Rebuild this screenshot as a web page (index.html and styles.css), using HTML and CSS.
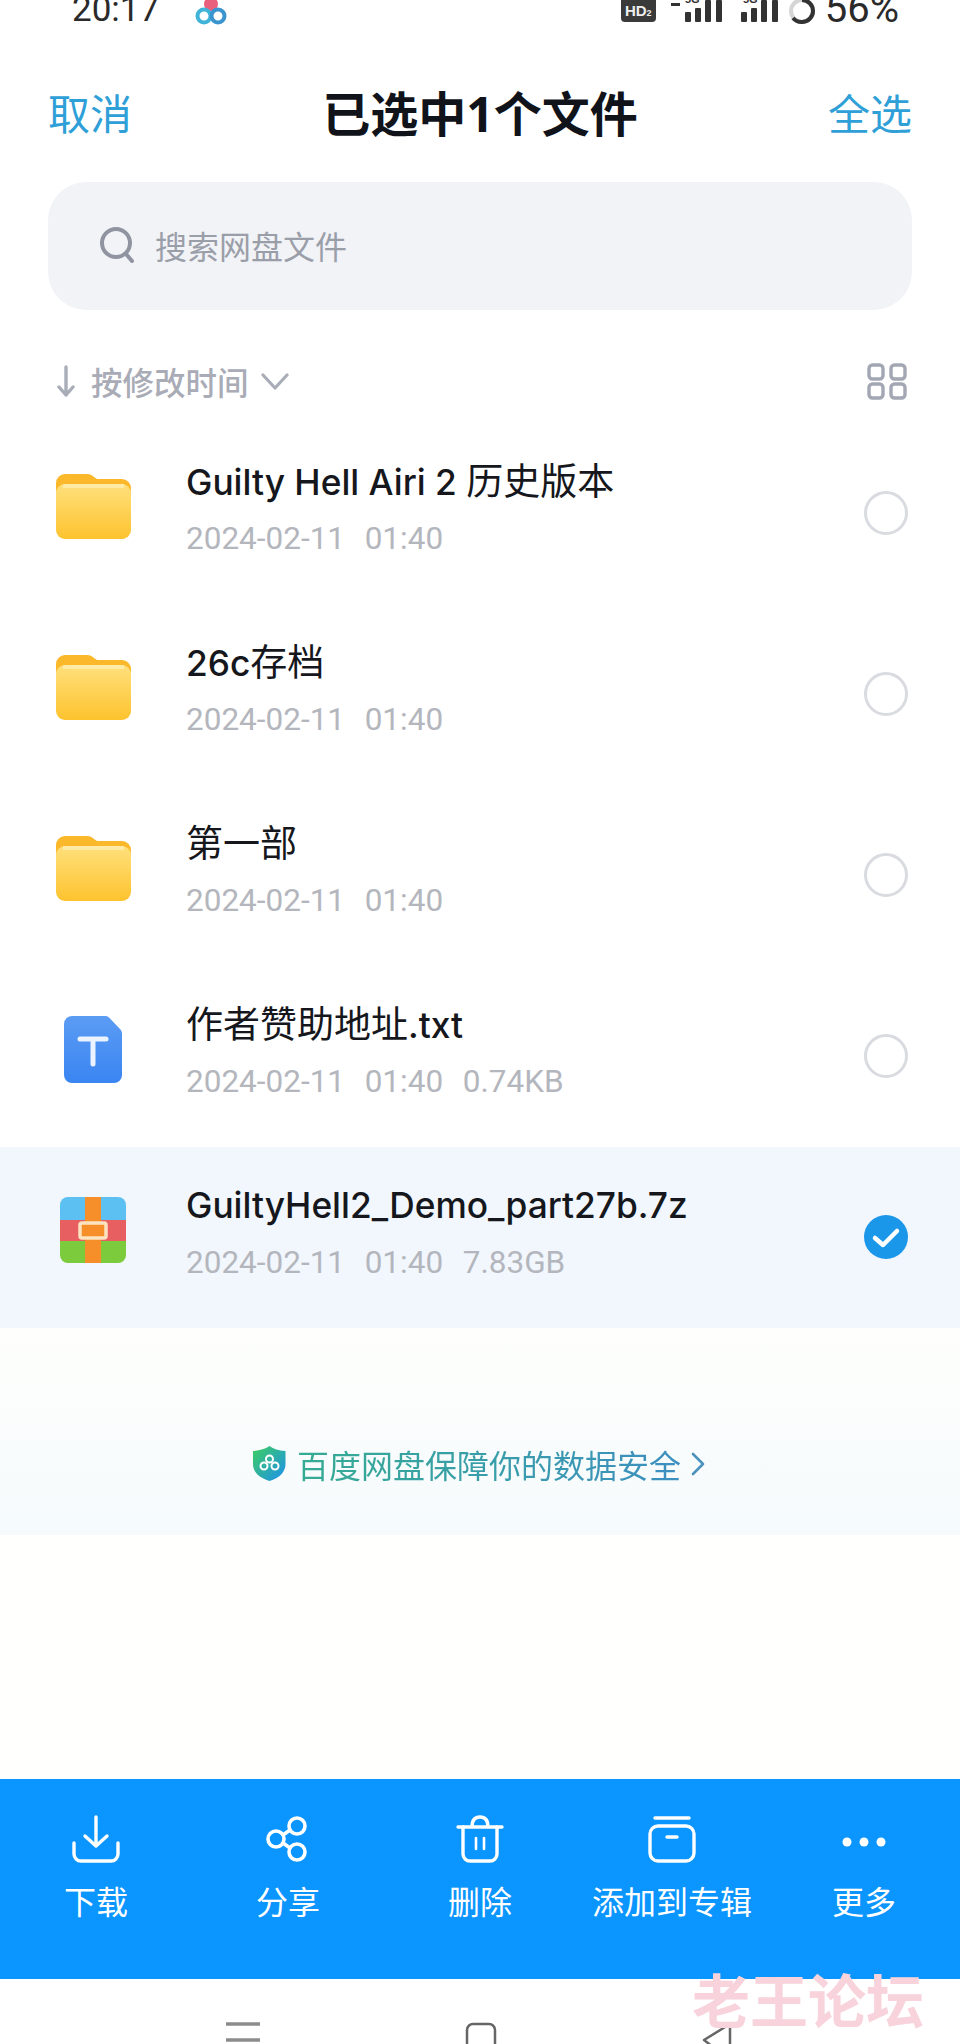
FILE: index.html
```html
<!DOCTYPE html>
<html lang="zh">
<head>
<meta charset="utf-8">
<title>已选中1个文件</title>
<link rel="stylesheet" href="styles.css">
</head>
<body>
<svg class="defs" width="0" height="0" aria-hidden="true">
  <defs>
    <linearGradient id="fold" x1="0" y1="0" x2="0" y2="1"><stop offset="0" stop-color="#ffe07c"/><stop offset="1" stop-color="#fdc32e"/></linearGradient>
    <linearGradient id="txt" x1="0" y1="0" x2="0" y2="1"><stop offset="0" stop-color="#5b9cf4"/><stop offset="1" stop-color="#3a85f2"/></linearGradient>
    <linearGradient id="shield" x1="0" y1="0" x2="1" y2="1"><stop offset="0" stop-color="#3ecf5e"/><stop offset="1" stop-color="#1c8ff0"/></linearGradient>
    <symbol id="folder" viewBox="0 0 75 66">
      <path d="M0 10a9 9 0 0 1 9-9h22c3 0 5 1 7 3l3 2h25a9 9 0 0 1 9 9v10H0z" fill="#fbb82a"/>
      <path d="M0 20a9 9 0 0 1 9-9h57a9 9 0 0 1 9 9v37a9 9 0 0 1-9 9H9a9 9 0 0 1-9-9z" fill="url(#fold)"/>
      <rect x="7" y="11" width="61" height="4" fill="#fff0b8" opacity=".7"/>
    </symbol>
    <symbol id="bars" viewBox="0 0 37 22">
      <rect x="0" y="12" width="6" height="10" rx="1"/><rect x="10" y="8" width="6" height="14" rx="1"/><rect x="20" y="0" width="6" height="22" rx="1"/><rect x="31" y="0" width="6" height="22" rx="1"/>
    </symbol>
  </defs>
</svg>

<header class="status">
  <span class="time">20:17</span>
  <svg class="cloud" viewBox="0 0 32 25" fill="none" stroke-width="4">
    <circle cx="16" cy="4" r="7" fill="#e8607c"/>
    <circle cx="9" cy="16" r="6.500" stroke="#3fb4d8"/>
    <circle cx="23" cy="16" r="6.500" stroke="#3a94d0"/>
  </svg>
  <span class="status-gap"></span>
  <span class="hd">HD<small>2</small></span>
  <svg class="sig-a" viewBox="0 0 52 24"><text x="14" y="3" class="sig-text">5G</text><rect x="0" y="3" width="9" height="3"/><use href="#bars" x="14" width="37" height="22"/></svg>
  <svg class="sig-b" viewBox="0 0 37 24"><text x="2" y="3" class="sig-text">5G</text><use href="#bars" width="37" height="22"/></svg>
  <svg class="ring" viewBox="0 0 28 28" fill="none" stroke-width="4">
    <circle cx="14" cy="11" r="11" stroke="#d5d5d5"/>
    <path d="M14 0a11 11 0 0 1 0 22 11 11 0 0 1-9-4" stroke="#333"/>
  </svg>
  <span class="batt">56%</span>
</header>

<nav class="topbar">
  <span class="link">取消</span>
  <h1 class="title">已选中1个文件</h1>
  <span class="link">全选</span>
</nav>

<div class="search">
  <svg class="search-ic" viewBox="0 0 38 36" fill="none" stroke="#9094a0" stroke-width="4" stroke-linecap="round"><circle cx="18" cy="16" r="14"/><path d="M28 27l6 7"/></svg>
  <span>搜索网盘文件</span>
</div>

<div class="sort">
  <svg class="sort-arrow" viewBox="0 0 20 32" fill="none" stroke="#a9adb8" stroke-width="3.4" stroke-linecap="round" stroke-linejoin="round"><path d="M10 2v28M3 22l7 8 7-8"/></svg>
  <span class="sort-label">按修改时间</span>
  <svg class="sort-chev" viewBox="0 0 28 17" fill="none" stroke="#a9adb8" stroke-width="3.2" stroke-linecap="round" stroke-linejoin="round"><path d="M2 2l12 13L26 2"/></svg>
  <span class="status-gap"></span>
  <svg class="grid-ic" viewBox="0 0 40 37" fill="none" stroke="#a3a7b3" stroke-width="3.4"><rect x="2" y="2" width="14" height="14" rx="3.5"/><rect x="24" y="2" width="14" height="14" rx="3.5"/><rect x="2" y="21" width="14" height="14" rx="3.5"/><rect x="24" y="21" width="14" height="14" rx="3.5"/></svg>
</div>

<ul class="list">
  <li class="row">
    <div class="ic"><svg class="ic-folder"><use href="#folder"/></svg></div>
    <div class="meta"><div class="name">Guilty Hell Airi 2 <span class="cjk">历史版本</span></div><div class="date">2024-02-11&nbsp;&nbsp;01:40</div></div>
    <span class="radio"></span>
  </li>
  <li class="row">
    <div class="ic"><svg class="ic-folder"><use href="#folder"/></svg></div>
    <div class="meta"><div class="name">26c<span class="cjk">存档</span></div><div class="date">2024-02-11&nbsp;&nbsp;01:40</div></div>
    <span class="radio"></span>
  </li>
  <li class="row">
    <div class="ic"><svg class="ic-folder"><use href="#folder"/></svg></div>
    <div class="meta"><div class="name"><span class="cjk">第一部</span></div><div class="date">2024-02-11&nbsp;&nbsp;01:40</div></div>
    <span class="radio"></span>
  </li>
  <li class="row">
    <div class="ic"><svg class="ic-txt" viewBox="0 0 58 67"><path d="M8 0h33c2 0 3 .6 4.500 2L56 13c1.400 1.400 2 3 2 5v41a8 8 0 0 1-8 8H8a8 8 0 0 1-8-8V8a8 8 0 0 1 8-8z" fill="url(#txt)"/><path d="M16 23h26M29 23v25" fill="none" stroke="#eaf3ff" stroke-width="5" stroke-linecap="round"/></svg></div>
    <div class="meta"><div class="name"><span class="cjk">作者赞助地址</span>.txt</div><div class="date">2024-02-11&nbsp;&nbsp;01:40&nbsp;&nbsp;0.74KB</div></div>
    <span class="radio"></span>
  </li>
  <li class="row selected">
    <div class="ic"><svg class="ic-zip" viewBox="0 0 66 66">
      <defs><clipPath id="zc"><rect width="66" height="66" rx="8"/></clipPath></defs>
      <g clip-path="url(#zc)">
        <rect width="66" height="23" fill="#5cc0f2"/><rect y="23" width="66" height="21" fill="#e85f62"/><rect y="44" width="66" height="22" fill="#7ccb3c"/>
        <rect x="25" width="16" height="66" fill="#f68f2a"/>
        <rect x="20" y="26" width="26" height="15" rx="2" fill="#f68f2a" stroke="#fde3c0" stroke-width="3.500"/>
      </g>
    </svg></div>
    <div class="meta"><div class="name">GuiltyHell2_Demo_part27b.7z</div><div class="date">2024-02-11&nbsp;&nbsp;01:40&nbsp;&nbsp;7.83GB</div></div>
    <svg class="check" viewBox="0 0 44 44"><circle cx="22" cy="22" r="22" fill="#1b97ea"/><path d="M11 23l8 7 14-14" fill="none" stroke="#fff" stroke-width="4.500" stroke-linecap="round" stroke-linejoin="round"/></svg>
  </li>
</ul>

<section class="promo">
  <svg class="shield" viewBox="0 0 33 35"><path d="M16.500 0c4 3 9 4.500 16 5v13c0 8-6 14-16 17C6 32 0 26 0 18V5c7-.5 12-2 16.500-5z" fill="url(#shield)"/><g fill="none" stroke="#fff" stroke-width="2"><circle cx="11" cy="20" r="3.500"/><circle cx="22" cy="20" r="3.500"/><circle cx="16.500" cy="13" r="3.500"/></g></svg>
  <span class="promo-text">百度网盘保障你的数据安全</span>
  <svg class="promo-chev" viewBox="0 0 14 24" fill="none" stroke="#4b93bd" stroke-width="2.600" stroke-linecap="round" stroke-linejoin="round"><path d="M2 2l10 10L2 22"/></svg>
</section>

<div class="spacer"></div>

<footer class="toolbar">
  <div class="tool">
    <svg viewBox="0 0 48 48" fill="none" stroke="#fff" stroke-width="3.400" stroke-linecap="round" stroke-linejoin="round"><path d="M24 2v29M13 21l11 10 11-10"/><path d="M2 28v11a7 7 0 0 0 7 7h30a7 7 0 0 0 7-7V28"/></svg>
    <span>下载</span>
  </div>
  <div class="tool">
    <svg viewBox="0 0 48 48" fill="none" stroke="#fff" stroke-width="3.600"><circle cx="33" cy="11" r="8"/><circle cx="33" cy="37" r="8"/><circle cx="12" cy="24" r="8"/><path d="M19 20l7-5M19 28l7 5"/></svg>
    <span>分享</span>
  </div>
  <div class="tool">
    <svg viewBox="0 0 48 48" fill="none" stroke="#fff" stroke-width="3.400" stroke-linecap="round" stroke-linejoin="round"><path d="M2 12h44M16 12c0-7 3-10 8-10s8 3 8 10"/><path d="M7 12v27a7 7 0 0 0 7 7h20a7 7 0 0 0 7-7V12"/><path d="M20 23v11M28 23v11" stroke-width="2.600"/></svg>
    <span>删除</span>
  </div>
  <div class="tool">
    <svg viewBox="0 0 48 48" fill="none" stroke="#fff" stroke-width="3.400" stroke-linecap="round" stroke-linejoin="round"><path d="M7 3h34"/><rect x="2" y="11" width="44" height="35" rx="8"/><path d="M19 22h10"/></svg>
    <span>添加到专辑</span>
  </div>
  <div class="tool">
    <svg viewBox="0 0 48 48" fill="#fff"><circle cx="7" cy="27" r="4.500"/><circle cx="24" cy="27" r="4.500"/><circle cx="41" cy="27" r="4.500"/></svg>
    <span>更多</span>
  </div>
</footer>

<div class="sysnav">
  <svg class="sys-menu" viewBox="0 0 34 20" fill="none" stroke="#8c8c8c" stroke-width="3.500"><path d="M0 2h34M0 18h34"/></svg>
  <svg class="sys-home" viewBox="0 0 32 32" fill="none" stroke="#666" stroke-width="2.500"><rect x="2" y="2" width="28" height="40" rx="6"/></svg>
  <svg class="sys-back" viewBox="0 0 32 32" fill="none" stroke="#666" stroke-width="2.500" stroke-linejoin="round"><path d="M29 2L3 18l26 20z"/></svg>
</div>

<div class="watermark">老王论坛</div>
</body>
</html>
```

FILE: styles.css
```css
* { box-sizing: border-box; }
html, body { margin: 0; padding: 0; }
body {
  position: relative;
  width: 960px;
  height: 2044px;
  overflow: hidden;
  display: flex;
  flex-direction: column;
  background: #fff;
  font-family: "Noto Sans", "Noto Sans CJK SC", sans-serif;
  color: #15171c;
}
.defs { position: absolute; }
ul { list-style: none; margin: 0; padding: 0; }
h1 { margin: 0; }

.status {
  height: 40px;
  overflow: hidden;
  display: flex;
  align-items: flex-start;
  padding: 0 61px 0 72px;
  color: #2a2a2a;
  flex: none;
}
.time {
  font-family: Roboto, sans-serif;
  font-size: 35px;
  line-height: 20px;
}
.batt {
  margin-left: 9px;
  font-family: Roboto, sans-serif;
  font-size: 40px;
  line-height: 17px;
}
.cloud { width: 32px; height: 25px; margin-left: 36px; }
.status-gap { flex: 1; }
.hd {
  width: 35px; height: 22px;
  background: #3a3a3a; color: #eee;
  border-radius: 0 0 4px 4px;
  font: 700 15px/22px "Liberation Sans", sans-serif;
  text-align: center;
}
.hd small { font-size: 9px; }
.sig-a { width: 52px; height: 24px; margin-left: 15px; fill: #333; }
.sig-b { width: 37px; height: 24px; margin-left: 18px; fill: #333; }
.sig-text { font: 700 11px "Liberation Sans", sans-serif; }
.ring { width: 28px; height: 28px; margin-left: 10px; }

.topbar {
  flex: none;
  height: 90px;
  margin-top: 28px;
  padding: 1px 48px 0;
  display: flex;
  align-items: center;
  justify-content: space-between;
}
.link { font-size: 42px; line-height: 90px; color: #2f9fd8; }
.title { font-size: 48px; font-weight: 700; line-height: 90px; color: #10131a; }

.search {
  flex: none;
  height: 128px;
  margin: 24px 48px 0;
  padding: 0 0 2px 50px;
  border-radius: 38px;
  background: #f2f3f7;
  display: flex;
  align-items: center;
  font-size: 32px;
  color: #9a9ea9;
}
.search-ic { width: 38px; height: 36px; margin-right: 19px; }

.sort {
  flex: none;
  height: 60px;
  margin-top: 42px;
  margin-bottom: 11px;
  padding: 0 53px 2px 56px;
  display: flex;
  align-items: center;
  color: #a9acb6;
}
.sort-arrow { width: 20px; height: 32px; }
.sort-label { margin-left: 15px; font-size: 31.5px; font-weight: 500; }
.sort-chev { width: 28px; height: 17px; margin-left: 12px; }
.grid-ic { width: 40px; height: 37px; }

.row {
  height: 181px;
  display: flex;
  align-items: flex-start;
  padding-right: 52px;
}
.row.selected { background: #f2f7fd; }
.ic { width: 186px; flex: none; padding-top: 50px; display: flex; justify-content: center; }
.ic svg { display: block; }
.ic-folder { width: 75px; height: 66px; }
.ic-txt { width: 58px; height: 67px; }
.ic-zip { width: 66px; height: 66px; }
.meta { flex: 1; padding-top: 37px; }
.name { height: 44px; font-size: 35.300px; line-height: 44px; font-weight: 500; font-family: Inter, "Noto Sans CJK SC", sans-serif; }
.cjk { font-size: 37px; font-weight: 400; }
.date { margin-top: 15px; font-family: Roboto, sans-serif; font-size: 31.500px; line-height: 40px; color: #b4b6bd; word-spacing: 2px; }
.radio {
  align-self: center;
  width: 44px; height: 44px;
  margin-bottom: 2px;
  border-radius: 50%;
  border: 3px solid #d9dbe0;
}
.check { align-self: center; width: 44px; height: 44px; margin-bottom: 2px; }

.promo {
  flex: none;
  height: 207px;
  display: flex;
  align-items: center;
  padding-left: 253px;
  padding-top: 64px;
  background: linear-gradient(180deg, #fefffc 0%, #f5fafc 100%);
}
.shield { width: 33px; height: 35px; }
.promo-text {
  margin-left: 11px;
  font-size: 32px;
  background: linear-gradient(90deg, #35ab93, #3d8fc0);
  background-clip: text;
  -webkit-background-clip: text;
  color: transparent;
}
.promo-chev { width: 14px; height: 24px; margin-left: 10px; }

.spacer { flex: 1; background: #fffffd; }

.toolbar {
  flex: none;
  height: 200px;
  background: #0a95ff;
  display: grid;
  grid-template-columns: repeat(5, 192px);
  color: #fff;
}
.tool {
  display: flex;
  flex-direction: column;
  align-items: center;
  padding-top: 36px;
  font-size: 32px;
}
.tool svg { width: 48px; height: 48px; }
.tool span { margin-top: 17px; line-height: 44px; }

.sysnav {
  flex: none;
  height: 65px;
  overflow: hidden;
  position: relative;
  display: grid;
  grid-template-columns: 260px 237px 236px;
  padding-top: 43px;
}
.sys-menu { width: 34px; height: 20px; justify-self: end; }
.sys-home { width: 32px; height: 32px; justify-self: end; }
.sys-back { width: 32px; height: 32px; justify-self: end; }

.watermark {
  position: absolute;
  left: 692px;
  top: 1968px;
  font-size: 58px;
  font-weight: 700;
  line-height: 66px;
  color: #f8d3dc;
  white-space: nowrap;
}
```
